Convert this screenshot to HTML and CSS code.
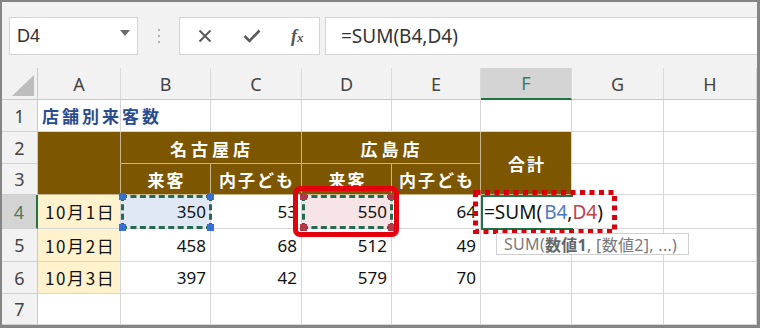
FILE: index.html
```html
<!DOCTYPE html>
<html lang="ja">
<head>
<meta charset="utf-8">
<title>Excel SUM</title>
<link rel="stylesheet" href="styles.css">
</head>
<body>
<div class="frame">
  <div class="toolbar">
    <div class="namebox">
      <span class="name">D4</span>
      <svg class="caret" width="10" height="6" viewBox="0 0 10 6"><path d="M0 0 L10 0 L5 6 Z" fill="#6b6b6b"/></svg>
    </div>
    <div class="sep">
      <svg width="4" height="16" viewBox="0 0 4 16"><circle cx="2" cy="2" r="1.2" fill="#b5b5b5"/><circle cx="2" cy="8" r="1.2" fill="#b5b5b5"/><circle cx="2" cy="14" r="1.2" fill="#b5b5b5"/></svg>
    </div>
    <div class="fbuttons">
      <svg class="ico" width="14" height="14" viewBox="0 0 14 14"><path d="M1.5 1.5 L12.5 12.5 M12.5 1.5 L1.5 12.5" stroke="#5a5a5a" stroke-width="2" fill="none"/></svg>
      <svg class="ico" width="18" height="14" viewBox="0 0 18 14"><path d="M1.5 7 L6.5 12 L16.5 1.5" stroke="#5a5a5a" stroke-width="2.6" fill="none"/></svg>
      <span class="fx">f<span class="fxx">x</span></span>
    </div>
    <div class="formula">=SUM(B4,D4)</div>
  </div>

  <div class="sheet">
    <div class="corner"><svg width="22" height="21" viewBox="0 0 22 21"><path d="M22 0 L22 21 L0 21 Z" fill="#bdbdbd"/></svg></div>
    <div class="ch">A</div><div class="ch">B</div><div class="ch">C</div><div class="ch">D</div><div class="ch">E</div><div class="ch ch-active">F</div><div class="ch">G</div><div class="ch">H</div>

    <div class="rh">1</div>
    <div class="c title">店舗別来客数</div><div class="c"></div><div class="c"></div><div class="c"></div><div class="c"></div><div class="c"></div><div class="c"></div><div class="c"></div>

    <div class="rh">2</div>
    <div class="c hd a23"></div>
    <div class="c hd span2">名古屋店</div>
    <div class="c hd span2">広島店</div>
    <div class="c hd f23">合計</div>
    <div class="c"></div><div class="c"></div>

    <div class="rh">3</div>
    <div class="c hd">来客</div><div class="c hd">内子ども</div><div class="c hd">来客</div><div class="c hd">内子ども</div>
    <div class="c"></div><div class="c"></div>

    <div class="rh rh-active">4</div>
    <div class="c date">10月1日</div><div class="c num b4">350</div><div class="c num">53</div><div class="c num d4">550</div><div class="c num">64</div>
    <div class="c ftext">=SUM(<span class="refb">B4</span>,<span class="refd">D4</span><span class="cursor"></span>)</div>
    <div class="c"></div><div class="c"></div>

    <div class="rh">5</div>
    <div class="c date">10月2日</div><div class="c num">458</div><div class="c num">68</div><div class="c num">512</div><div class="c num">49</div><div class="c"></div><div class="c"></div><div class="c"></div>

    <div class="rh">6</div>
    <div class="c date">10月3日</div><div class="c num">397</div><div class="c num">42</div><div class="c num">579</div><div class="c num">70</div><div class="c"></div><div class="c"></div><div class="c"></div>

    <div class="rh">7</div>
    <div class="c"></div><div class="c"></div><div class="c"></div><div class="c"></div><div class="c"></div><div class="c"></div><div class="c"></div><div class="c"></div>

    <div class="ants ants-b"><i class="h tl"></i><i class="h tr"></i><i class="h bl"></i><i class="h br"></i></div>
    <div class="ants ants-d"><i class="h tl"></i><i class="h tr"></i><i class="h bl"></i><i class="h br"></i></div>
    <div class="active"></div>
    <div class="redbox"></div>
    <svg class="dotbox" width="144" height="44" viewBox="0 0 144 44"><rect x="2.5" y="2.5" width="139" height="39" fill="none" stroke="#d9000d" stroke-width="5" stroke-dasharray="5 4.5"/></svg>
    <div class="tip">SUM(<b>数値1</b>, [数値2], ...)</div>
  </div>
</div>
</body>
</html>
```

FILE: styles.css
```css
* { box-sizing: border-box; }
html, body { margin: 0; padding: 0; }
body { width: 760px; height: 328px; overflow: hidden; font-family: "Noto Sans CJK JP", "Noto Sans", sans-serif; }

.frame {
  width: 760px; height: 328px;
  border: 2px solid #858585;
  border-right-width: 3px; border-bottom-width: 3px;
  background: #f2f2f2;
  display: flex; flex-direction: column;
}

.toolbar {
  height: 66px;
  padding: 15px 0 0 7px;
  display: flex; align-items: flex-start;
}
.namebox {
  width: 129px; height: 38px;
  background: #fff; border: 1px solid #d3d3d3;
  display: flex; align-items: center; justify-content: space-between;
  padding: 0 7px 0 7px;
}
.name { font-family: "Liberation Sans", "Noto Sans", sans-serif; font-size: 18px; color: #333; }
.caret { margin-top: -6px; }
.sep { width: 41px; height: 38px; display: flex; align-items: center; justify-content: center; }
.fbuttons {
  width: 141px; height: 38px;
  background: #fff; border: 1px solid #d3d3d3;
  display: flex; align-items: center; justify-content: space-between;
  padding: 0 9px 0 18px;
}
.fx { font-family: "Liberation Serif", "DejaVu Serif", serif; font-style: italic; font-weight: bold; font-size: 18px; color: #555; width: 19px; }
.fxx { font-size: 13px; }
.formula {
  margin-left: 5px; flex: 1; height: 38px;
  background: #fff; border: 1px solid #d3d3d3; border-right: none;
  padding-left: 15px; display: flex; align-items: center;
  font-family: "Noto Sans", "Liberation Sans", sans-serif; font-size: 19px; color: #333;
}

.sheet {
  position: relative;
  flex: 1;
  background: #fff;
  display: grid;
  grid-template-columns: 36px 83px 90px 91px 90px 89px 91px 92px 93px;
  grid-template-rows: 32px 32px 32px 31px 34px 33px 32px 31px;
}
.corner { background: #f2f2f2; border-right: 1px solid #c8c8c8; border-bottom: 1px solid #c8c8c8; display: flex; align-items: flex-end; justify-content: flex-end; padding: 0 3px 3px 0; }
.ch {
  background: #f2f2f2; border-right: 1px solid #dadada; border-bottom: 1px solid #c8c8c8;
  display: flex; align-items: center; justify-content: center;
  font-family: "Noto Sans", "Liberation Sans", sans-serif; font-size: 18px; color: #444;
}
.ch-active { background: #d4d4d4; border-bottom: 2px solid #217346; color: #3c7a5a; }
.rh {
  background: #f2f2f2; border-right: 1px solid #c8c8c8; border-bottom: 1px solid #d0d0d0;
  display: flex; align-items: center; justify-content: center;
  font-family: "Noto Sans", "Liberation Sans", sans-serif; font-size: 18px; color: #444;
}
.rh-active { background: #d4d4d4; border-right: 2px solid #217346; color: #4d7a62; }

.c {
  border-right: 1px solid #d6d6d6; border-bottom: 1px solid #d6d6d6;
  display: flex; align-items: center;
  white-space: nowrap; font-size: 17px; color: #111;
}
.title { color: #2a4d8f; font-weight: bold; padding-left: 4px; letter-spacing: 3px; font-size: 17px; }
.hd {
  background: #7c5600; color: #fff; font-weight: bold; justify-content: center;
  border-right: 1px solid #c9b58a; border-bottom: 1px solid #c9b58a;
  letter-spacing: 2px; padding-left: 2px;
}
.a23 { grid-row: span 2; }
.span2 { grid-column: span 2; letter-spacing: 4px; padding-top: 2px; }
.f23 { grid-row: span 2; border-right: 1px solid #d6d6d6; }
.date { background: #fff2cc; padding-left: 7px; letter-spacing: 1.6px; }
.num { justify-content: flex-end; padding-right: 4px; font-family: "Noto Sans", "Liberation Sans", sans-serif; font-size: 17px; }
.b4 { background: #dfe8f4; }
.d4 { background: #f6e4e6; }
.ftext { padding-left: 3px; font-family: "Noto Sans", "Liberation Sans", sans-serif; font-size: 19px; color: #111; border-right-color: transparent; }
.refb { color: #4a78c6; margin-left: 2px; }
.refd { color: #c0404a; }
.cursor { display: inline-block; width: 2px; height: 20px; background: #111; margin: 0; }

.ants {
  position: absolute; top: 127px; width: 91px; height: 34px;
  border: 3px dashed #236b4e;
}
.ants-b { left: 119px; }
.ants-d { left: 300px; }
.h { position: absolute; width: 7px; height: 7px; background: #3a6fd2; }
.ants-d .h { background: #b23a48; }
.tl { left: -5px; top: -5px; }
.tr { right: -5px; top: -5px; }
.bl { left: -5px; bottom: -5px; }
.br { right: -5px; bottom: -5px; }

.active {
  position: absolute; left: 479px; top: 127px; width: 92px; height: 35px;
  border: 2px solid #217346; border-right: none;
}
.redbox {
  position: absolute; left: 291px; top: 118px; width: 106px; height: 51px;
  border: 5px solid #e5000e; border-radius: 7px;
}
.dotbox { position: absolute; left: 471px; top: 122px; }
.tip {
  position: absolute; left: 494px; top: 165px; width: 193px; height: 22px;
  background: #fff; border: 1px solid #d0d0d0;
  font-size: 16px; color: #7a7a7a; padding-left: 7px; letter-spacing: 0.3px;
  display: flex; align-items: center; white-space: nowrap; overflow: hidden;
  font-family: "Noto Sans", "Noto Sans CJK JP", sans-serif;
}
.tip b { color: #666; }
```
